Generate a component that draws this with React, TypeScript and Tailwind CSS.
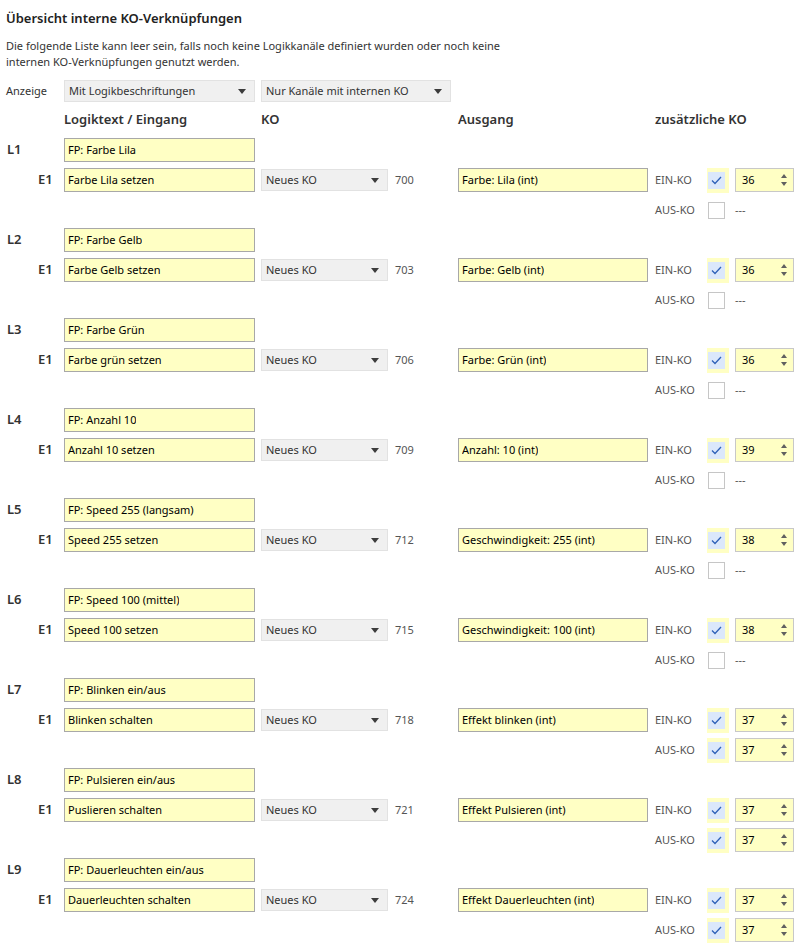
import React from "react";

type Channel = {
  id: string;
  title: string;
  input: string;
  ko: number;
  output: string;
  ein: number;
  aus: number | null;
};

const channels: Channel[] = [
  { id: "L1", title: "FP: Farbe Lila", input: "Farbe Lila setzen", ko: 700, output: "Farbe: Lila (int)", ein: 36, aus: null },
  { id: "L2", title: "FP: Farbe Gelb", input: "Farbe Gelb setzen", ko: 703, output: "Farbe: Gelb (int)", ein: 36, aus: null },
  { id: "L3", title: "FP: Farbe Grün", input: "Farbe grün setzen", ko: 706, output: "Farbe: Grün (int)", ein: 36, aus: null },
  { id: "L4", title: "FP: Anzahl 10", input: "Anzahl 10 setzen", ko: 709, output: "Anzahl: 10 (int)", ein: 39, aus: null },
  { id: "L5", title: "FP: Speed 255 (langsam)", input: "Speed 255 setzen", ko: 712, output: "Geschwindigkeit: 255 (int)", ein: 38, aus: null },
  { id: "L6", title: "FP: Speed 100 (mittel)", input: "Speed 100 setzen", ko: 715, output: "Geschwindigkeit: 100 (int)", ein: 38, aus: null },
  { id: "L7", title: "FP: Blinken ein/aus", input: "Blinken schalten", ko: 718, output: "Effekt blinken (int)", ein: 37, aus: 37 },
  { id: "L8", title: "FP: Pulsieren ein/aus", input: "Puslieren schalten", ko: 721, output: "Effekt Pulsieren (int)", ein: 37, aus: 37 },
  { id: "L9", title: "FP: Dauerleuchten ein/aus", input: "Dauerleuchten schalten", ko: 724, output: "Effekt Dauerleuchten (int)", ein: 37, aus: 37 },
];

const font = { fontFamily: '"Segoe UI", "Noto Sans", sans-serif' };

function Caret() {
  return (
    <svg width="8" height="5" viewBox="0 0 8 5" className="shrink-0">
      <path d="M0 0h8L4 5z" fill="#3c3c3c" />
    </svg>
  );
}

function YellowField({ text }: { text: string }) {
  return (
    <div className="flex h-[24px] items-center border border-[#a8a8a8] bg-[#ffffc4] px-[3px] text-[11px] text-black">
      <span className="truncate">{text}</span>
    </div>
  );
}

function Select({ text, w }: { text: string; w: string }) {
  return (
    <div
      className={`flex h-[22px] items-center justify-between border border-[#e2e2e2] bg-[#f0f0f0] pl-[4px] pr-[8px] text-[11px] text-[#333] ${w}`}
    >
      <span>{text}</span>
      <Caret />
    </div>
  );
}

function CheckBox({ checked }: { checked: boolean }) {
  if (!checked) {
    return (
      <div className="flex h-[24px] w-[22px] items-center">
        <div className="ml-[1px] h-[17px] w-[17px] border border-[#c6c6c6] bg-white" />
      </div>
    );
  }
  return (
    <div className="flex h-[25px] w-[22px] items-center bg-[#ffffc4]">
      <div className="ml-[1px] flex h-[17px] w-[17px] items-center justify-center bg-[#dbe8fb]">
        <svg width="11" height="9" viewBox="0 0 11 9">
          <path d="M1 4.5l3 3L10 1" fill="none" stroke="#2f62b8" strokeWidth="1.3" />
        </svg>
      </div>
    </div>
  );
}

function Spinner({ value }: { value: number }) {
  return (
    <div className="flex h-[24px] w-[59px] items-center justify-between border border-[#c8c8c8] bg-[#ffffc4] pl-[6px] pr-[6px] text-[11px] text-black">
      <span>{value}</span>
      <div className="flex flex-col items-center gap-[4px]">
        <svg width="6" height="4" viewBox="0 0 6 4">
          <path d="M0 4h6L3 0z" fill="#606060" />
        </svg>
        <svg width="6" height="4" viewBox="0 0 6 4">
          <path d="M0 0h6L3 4z" fill="#606060" />
        </svg>
      </div>
    </div>
  );
}

const row = "grid h-[30px] grid-cols-[58px_191px_6px_127px_70px_190px_59px_28px_59px] items-center";

function Group({ c }: { c: Channel }) {
  return (
    <div>
      <div className={row}>
        <div className="pl-[1px] text-[13px] font-semibold text-[#333]">{c.id}</div>
        <YellowField text={c.title} />
      </div>
      <div className={row}>
        <div className="pl-[32px] text-[13px] font-semibold text-[#333]">E1</div>
        <YellowField text={c.input} />
        <div />
        <Select text="Neues KO" w="w-[127px]" />
        <div className="pl-[7px] text-[11px] text-[#555]">{c.ko}</div>
        <YellowField text={c.output} />
        <div className="pl-[7px] text-[11px] text-[#555]">EIN-KO</div>
        <CheckBox checked />
        <Spinner value={c.ein} />
      </div>
      <div className={row}>
        <div />
        <div />
        <div />
        <div />
        <div />
        <div />
        <div className="pl-[7px] text-[11px] text-[#555]">AUS-KO</div>
        <CheckBox checked={c.aus !== null} />
        {c.aus !== null ? (
          <Spinner value={c.aus} />
        ) : (
          <div className="text-[11px] text-[#555]">---</div>
        )}
      </div>
    </div>
  );
}

export default function App() {
  return (
    <div className="h-[946px] w-[796px] overflow-hidden bg-white pl-[6px] pt-[8px] text-[#333]" style={font}>
      <div className="text-[13px] font-semibold leading-[20px] text-[#222]">
        Übersicht interne KO-Verknüpfungen
      </div>
      <p className="mt-[10px] text-[11px] leading-[16px] text-[#333]">
        Die folgende Liste kann leer sein, falls noch keine Logikkanäle definiert wurden oder noch keine
        <br />
        internen KO-Verknüpfungen genutzt werden.
      </p>
      <div className="mt-[10px] flex h-[22px] items-center text-[11px]">
        <div className="w-[58px]">Anzeige</div>
        <Select text="Mit Logikbeschriftungen" w="w-[191px]" />
        <div className="w-[6px]" />
        <Select text="Nur Kanäle mit internen KO" w="w-[190px]" />
      </div>
      <div className="mt-[8px] grid h-[20px] grid-cols-[58px_197px_197px_197px_140px] items-center text-[13px] font-semibold text-[#333]">
        <div />
        <div>Logiktext / Eingang</div>
        <div>KO</div>
        <div>Ausgang</div>
        <div>zusätzliche KO</div>
      </div>
      <div className="mt-[5px]">
        {channels.map((c) => (
          <Group key={c.id} c={c} />
        ))}
      </div>
    </div>
  );
}
